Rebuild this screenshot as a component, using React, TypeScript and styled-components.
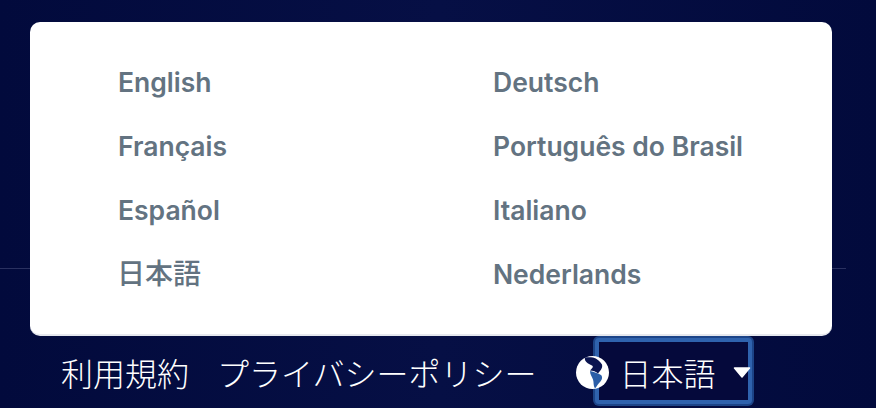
import React from "react";
import styled, { createGlobalStyle } from "styled-components";

const Global = createGlobalStyle`
  html, body { margin: 0; padding: 0; }
  body { width: 876px; height: 408px; overflow: hidden; background: #020a3c; }
`;

const Page = styled.div`
  position: relative;
  width: 876px;
  height: 408px;
  overflow: hidden;
  background: linear-gradient(90deg, #020a3c 0%, #060f45 50%, #020a3c 100%);
  display: flex;
  flex-direction: column;
  font-family: Inter, "Noto Sans CJK JP", sans-serif;
`;

const Divider = styled.div`
  margin-top: 268px;
  width: 846px;
  height: 1px;
  background: #2a3160;
`;

const Footer = styled.footer`
  margin-top: 80px;
  display: flex;
  align-items: flex-start;
  padding-left: 61px;
  color: #fff;
  font-family: "Noto Sans CJK JP", sans-serif;
  font-weight: 300;
  font-size: 32px;
  line-height: 46px;
`;

const FooterLink = styled.a<{ $gap: number }>`
  color: #fff;
  white-space: nowrap;
  margin-right: ${(p) => p.$gap}px;
`;

const LangButton = styled.button`
  position: relative;
  display: flex;
  align-items: center;
  margin: 0;
  padding: 0;
  border: 0;
  background: none;
  color: #fff;
  font: inherit;
  white-space: nowrap;
`;

const FocusRing = styled.span`
  position: absolute;
  left: 19px;
  top: -11px;
  width: 157px;
  height: 66px;
  box-sizing: border-box;
  background: #05093b;
  border: 4px solid #2f62ad;
  border-radius: 4px;
  box-shadow: 0 0 0 2px #1c4488;
`;

const Globe = styled.svg`
  position: relative;
  width: 33px;
  height: 33px;
  margin-right: 10px;
`;

const LangLabel = styled.span`
  position: relative;
`;

const Caret = styled.svg`
  position: relative;
  margin-left: 18px;
  width: 18px;
  height: 11px;
`;

const Menu = styled.div`
  position: absolute;
  left: 30px;
  top: 22px;
  width: 802px;
  height: 314px;
  box-sizing: border-box;
  background: #fff;
  border-bottom: 2px solid #e6e8ee;
  border-radius: 10px;
  padding: 28px 0 0 88px;
  display: grid;
  grid-template-columns: 375px 1fr;
  grid-auto-rows: 64px;
`;

const MenuItem = styled.a<{ $cjk?: boolean }>`
  color: #637381;
  font-size: ${(p) => (p.$cjk ? 28 : 26.5)}px;
  font-weight: ${(p) => (p.$cjk ? 500 : 600)};
  line-height: 64px;
  height: 64px;
  white-space: nowrap;
  margin-left: ${(p) => (p.$cjk ? -1 : 0)}px;
`;

const items = [
  "English", "Deutsch",
  "Français", "Português do Brasil",
  "Español", "Italiano",
  "日本語", "Nederlands",
];

export default function App() {
  return (
    <Page>
      <Global />
      <Divider />
      <Footer>
        <FooterLink $gap={28}>利用規約</FooterLink>
        <FooterLink $gap={40}>プライバシーポリシー</FooterLink>
        <LangButton>
          <FocusRing />
          <Globe viewBox="0 0 33 33">
            <circle cx="16.5" cy="16.500" r="16.500" fill="#fff" />
            <path d="M14 15c4 1 8 2 11 4 2 2 1 5-1 7-2 2-3 4-5 6.500-2-3-1-6-2-9-1-3-3-5-3-8.500z" fill="#2b5ea7" />
            <path d="M9 1.500c-1 4 3 6 7 8 2 1 0 3-2 5 3 0 6 1 8 3 2-3 5-5 4-9-2-3-5-6-9-7-3-.5-5-.5-8 0z" fill="#0a1450" />
          </Globe>
          <LangLabel>日本語</LangLabel>
          <Caret viewBox="0 0 18 11">
            <path d="M1.500 1h15L9 10z" fill="#fff" stroke="#fff" strokeWidth="1.500" strokeLinejoin="round" />
          </Caret>
        </LangButton>
      </Footer>
      <Menu>
        {items.map((t) => (
          <MenuItem key={t} $cjk={t === "日本語"}>{t}</MenuItem>
        ))}
      </Menu>
    </Page>
  );
}
